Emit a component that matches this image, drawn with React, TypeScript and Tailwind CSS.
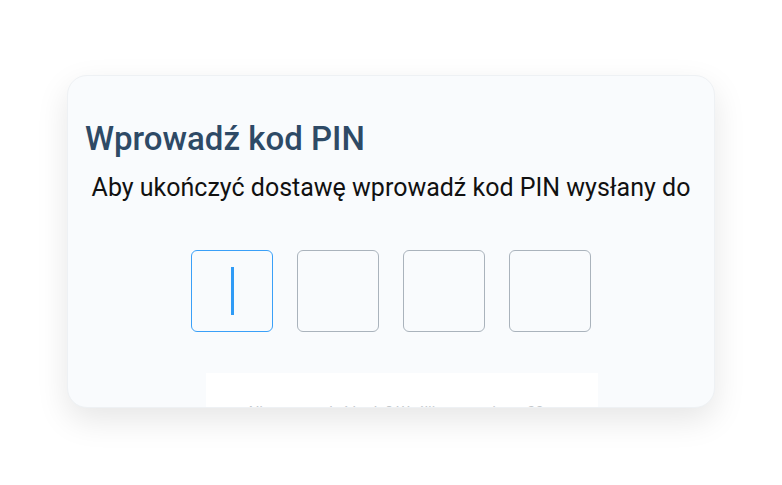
export default function App() {
  const digits = [0, 1, 2, 3]

  return (
    <div className="w-[782px] h-[485px] bg-white pt-[75px] pl-[67px]" style={{ fontFamily: 'Roboto, "Noto Sans", sans-serif' }}>
      <div className="w-[648px] h-[333px] rounded-[20px] bg-[#f9fbfd] border border-[#eef1f4] shadow-[0_12px_32px_rgba(0,0,0,0.10)] overflow-hidden flex flex-col">
        <h1 className="pt-[43px] pl-[17px] text-[33px] leading-[40px] font-medium text-[#2e4a66]">
          Wprowadź kod PIN
        </h1>
        <p className="mt-[14px] text-center text-[25px] leading-[30px] text-[#111111]">
          Aby ukończyć dostawę wprowadź kod PIN wysłany do
        </p>
        <div className="mt-[47px] flex justify-center gap-[24px]">
          {digits.map((i) => (
            <div
              key={i}
              className={`w-[82px] h-[82px] rounded-[6px] border flex items-center justify-center ${
                i === 0 ? 'border-[#3aa0f8]' : 'border-[#aab3bc]'
              }`}
            >
              {i === 0 && <div className="w-[3px] h-[48px] bg-[#2f9bf6]" />}
            </div>
          ))}
        </div>
        <div className="mt-auto ml-[138px] w-[392px] h-[34px] bg-white overflow-hidden flex items-end justify-center">
          <span className="text-[15px] leading-none text-[#c4c8cc] translate-y-[13px]">
            Nie otrzymałeś kodu? Wyślij ponownie za 30 s
          </span>
        </div>
      </div>
    </div>
  )
}
